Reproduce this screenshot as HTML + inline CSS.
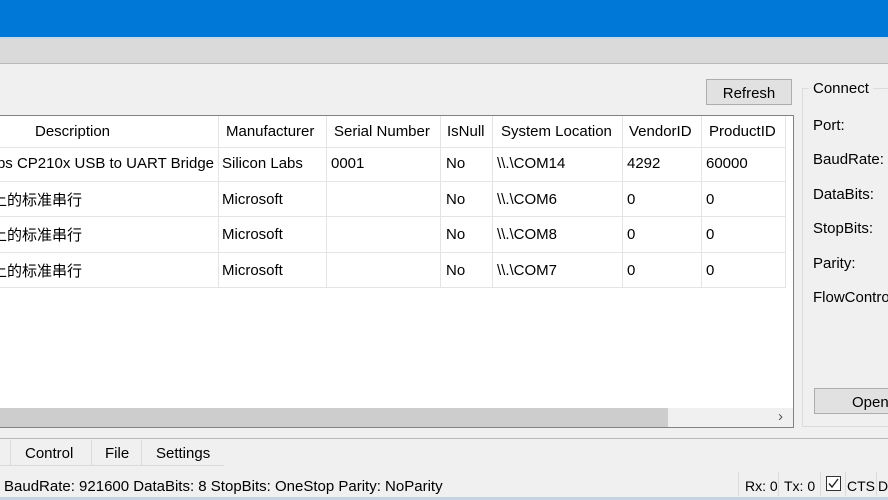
<!DOCTYPE html><html><head><meta charset="utf-8"><style>
*{margin:0;padding:0;box-sizing:border-box}
body{width:888px;height:500px;overflow:hidden;background:#f0f0f0;font-family:"Liberation Sans","Noto Sans CJK SC",sans-serif;font-size:15px;color:#000;position:relative}
.a{position:absolute}
.t{white-space:nowrap;margin-top:2px}
</style></head><body>
<div class="a" style="left:0;top:0;width:888px;height:37px;background:#0078d7"></div>
<div class="a" style="left:0;top:37px;width:888px;height:2px;background:#c8d8ea"></div>
<div class="a" style="left:0;top:39px;width:888px;height:25px;background:#dadada;border-bottom:1px solid #b9b9b9"></div>
<div class="a" style="left:706px;top:79px;width:86px;height:26px;background:#e1e1e1;border:1px solid #adadad"></div>
<div class="a t" style="left:706px;top:83px;width:86px;text-align:center">Refresh</div>
<div class="a" style="left:-2px;top:115px;width:796px;height:313px;background:#fff;border:1px solid #828282"></div>
<div class="a" style="left:0;top:147px;width:785px;height:1px;background:#e4e4e4"></div>
<div class="a" style="left:0;top:181px;width:785px;height:1px;background:#e4e4e4"></div>
<div class="a" style="left:0;top:216px;width:785px;height:1px;background:#e4e4e4"></div>
<div class="a" style="left:0;top:252px;width:785px;height:1px;background:#e4e4e4"></div>
<div class="a" style="left:0;top:287px;width:785px;height:1px;background:#e4e4e4"></div>
<div class="a" style="left:218px;top:116px;width:1px;height:172px;background:#e4e4e4"></div>
<div class="a" style="left:326px;top:116px;width:1px;height:172px;background:#e4e4e4"></div>
<div class="a" style="left:440px;top:116px;width:1px;height:172px;background:#e4e4e4"></div>
<div class="a" style="left:492px;top:116px;width:1px;height:172px;background:#e4e4e4"></div>
<div class="a" style="left:622px;top:116px;width:1px;height:172px;background:#e4e4e4"></div>
<div class="a" style="left:701px;top:116px;width:1px;height:172px;background:#e4e4e4"></div>
<div class="a" style="left:785px;top:116px;width:1px;height:172px;background:#e4e4e4"></div>
<div class="a t" style="left:35px;top:121px">Description</div>
<div class="a t" style="left:226px;top:121px">Manufacturer</div>
<div class="a t" style="left:334px;top:121px">Serial Number</div>
<div class="a t" style="left:447px;top:121px">IsNull</div>
<div class="a t" style="left:501px;top:121px">System Location</div>
<div class="a t" style="left:629px;top:121px">VendorID</div>
<div class="a t" style="left:709px;top:121px">ProductID</div>
<div class="a t" style="right:674px;top:153px">abs CP210x USB to UART Bridge</div>
<div class="a t" style="left:222px;top:153px">Silicon Labs</div>
<div class="a t" style="left:331px;top:153px">0001</div>
<div class="a t" style="left:446px;top:153px">No</div>
<div class="a t" style="left:497px;top:153px">\\.\COM14</div>
<div class="a t" style="left:627px;top:153px">4292</div>
<div class="a t" style="left:706px;top:153px">60000</div>
<div class="a t" style="left:-8px;top:187px">上的标准串行</div>
<div class="a t" style="left:222px;top:189px">Microsoft</div>
<div class="a t" style="left:446px;top:189px">No</div>
<div class="a t" style="left:497px;top:189px">\\.\COM6</div>
<div class="a t" style="left:627px;top:189px">0</div>
<div class="a t" style="left:706px;top:189px">0</div>
<div class="a t" style="left:-8px;top:222px">上的标准串行</div>
<div class="a t" style="left:222px;top:224px">Microsoft</div>
<div class="a t" style="left:446px;top:224px">No</div>
<div class="a t" style="left:497px;top:224px">\\.\COM8</div>
<div class="a t" style="left:627px;top:224px">0</div>
<div class="a t" style="left:706px;top:224px">0</div>
<div class="a t" style="left:-8px;top:258px">上的标准串行</div>
<div class="a t" style="left:222px;top:260px">Microsoft</div>
<div class="a t" style="left:446px;top:260px">No</div>
<div class="a t" style="left:497px;top:260px">\\.\COM7</div>
<div class="a t" style="left:627px;top:260px">0</div>
<div class="a t" style="left:706px;top:260px">0</div>
<div class="a" style="left:0;top:408px;width:793px;height:19px;background:#f0f0f0"></div>
<div class="a" style="left:0;top:408px;width:668px;height:19px;background:#cdcdcd"></div>
<div class="a t" style="left:778px;top:406px;font-size:15px;color:#555">›</div>
<div class="a" style="left:802px;top:88px;width:100px;height:339px;border:1px solid #dcdcdc"></div>
<div class="a t" style="left:809px;top:78px;background:#f0f0f0;padding:0 4px">Connect</div>
<div class="a t" style="left:813px;top:115px">Port:</div>
<div class="a t" style="left:813px;top:149px">BaudRate:</div>
<div class="a t" style="left:813px;top:184px">DataBits:</div>
<div class="a t" style="left:813px;top:218px">StopBits:</div>
<div class="a t" style="left:813px;top:253px">Parity:</div>
<div class="a t" style="left:813px;top:287px">FlowControl</div>
<div class="a" style="left:814px;top:388px;width:90px;height:26px;background:#e1e1e1;border:1px solid #adadad"></div>
<div class="a t" style="left:852px;top:392px">Open</div>
<div class="a" style="left:0;top:438px;width:888px;height:1px;background:#b9b9b9"></div>
<div class="a" style="left:0;top:439px;width:224px;height:27px;border-bottom:1px solid #dadada"></div>
<div class="a" style="left:10px;top:440px;width:1px;height:25px;background:#dadada"></div>
<div class="a" style="left:91px;top:440px;width:1px;height:25px;background:#dadada"></div>
<div class="a" style="left:141px;top:440px;width:1px;height:25px;background:#dadada"></div>
<div class="a t" style="left:25px;top:443px">Control</div>
<div class="a t" style="left:105px;top:443px">File</div>
<div class="a t" style="left:156px;top:443px">Settings</div>
<div class="a t" style="left:4px;top:476px">BaudRate: 921600 DataBits: 8 StopBits: OneStop Parity: NoParity</div>
<div class="a" style="left:738px;top:472px;width:1px;height:24px;background:#dadada"></div>
<div class="a t" style="left:745px;top:476px;font-size:14px">Rx: 0</div>
<div class="a" style="left:778px;top:472px;width:1px;height:24px;background:#dadada"></div>
<div class="a t" style="left:784px;top:476px;font-size:14px">Tx: 0</div>
<div class="a" style="left:820px;top:472px;width:1px;height:24px;background:#dadada"></div>
<div class="a" style="left:826px;top:476px;width:15px;height:15px;border:1px solid #333;background:#fff"></div>
<svg class="a" style="left:826px;top:476px" width="15" height="15"><path d="M3 7.5 L6 11 L12 3" stroke="#222" stroke-width="1.4" fill="none"/></svg>
<div class="a" style="left:845px;top:472px;width:1px;height:24px;background:#dadada"></div>
<div class="a t" style="left:847px;top:476px;font-size:14px">CTS</div>
<div class="a" style="left:876px;top:472px;width:1px;height:24px;background:#dadada"></div>
<div class="a t" style="left:878px;top:476px;font-size:14px">D</div>
<div class="a" style="left:0;top:497px;width:888px;height:3px;background:#c5d3e0"></div>
</body></html>
